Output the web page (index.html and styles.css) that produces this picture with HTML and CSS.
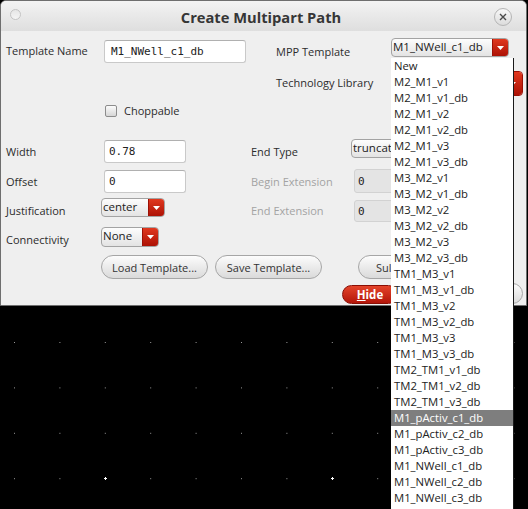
FILE: index.html
```html
<!DOCTYPE html>
<html>
<head>
<meta charset="utf-8">
<link rel="stylesheet" href="styles.css">
</head>
<body>
<div class="screen">
  <div class="window">
    <div class="titlebar">
      <span class="tb-dot"></span>
      <span class="title">Create Multipart Path</span>
      <span class="tb-close"><svg width="8" height="8" viewBox="0 0 8 8"><path d="M1 1L7 7M7 1L1 7" stroke="#4a4a4a" stroke-width="1.4" fill="none"/></svg></span>
    </div>
    <div class="form">
      <div class="row r1">
        <span class="lbl w98">Template Name</span>
        <div class="input mono in-name">M1_NWell_c1_db</div>
        <span class="lbl lbl-mpp">MPP Template</span>
        <div class="select sel-mpp"><span class="sel-text">M1_NWell_c1_db</span><span class="sel-btn"><svg width="7" height="4" viewBox="0 0 7 4"><path d="M0 0H7L3.5 4Z" fill="#fff"/></svg></span></div>
      </div>
      <div class="row r2">
        <span class="lbl lbl-tech">Technology Library</span>
        <div class="select sel-tech"><span class="sel-text"></span><span class="sel-btn wide"><svg width="7" height="4" viewBox="0 0 7 4"><path d="M0 0H7L3.5 4Z" fill="#fff"/></svg></span></div>
      </div>
      <div class="row r3">
        <span class="check"></span>
        <span class="check-lbl">Choppable</span>
      </div>
      <div class="row r4">
        <span class="lbl w98">Width</span>
        <div class="input mono in-small">0.78</div>
        <span class="lbl lbl-right w100">End Type</span>
        <div class="select sel-trunc"><span class="sel-text">truncat</span><span class="sel-btn"><svg width="7" height="4" viewBox="0 0 7 4"><path d="M0 0H7L3.5 4Z" fill="#fff"/></svg></span></div>
      </div>
      <div class="row r5">
        <span class="lbl w98">Offset</span>
        <div class="input mono in-small">0</div>
        <span class="lbl lbl-right w103 dis">Begin Extension</span>
        <div class="input mono in-dis h24">0</div>
      </div>
      <div class="row r6">
        <span class="lbl w95">Justification</span>
        <div class="select sel-center"><span class="sel-text">center</span><span class="sel-btn"><svg width="7" height="4" viewBox="0 0 7 4"><path d="M0 0H7L3.5 4Z" fill="#fff"/></svg></span></div>
        <span class="lbl lbl-endext w103 dis">End Extension</span>
        <div class="input mono in-dis h22">0</div>
      </div>
      <div class="row r7">
        <span class="lbl w95">Connectivity</span>
        <div class="select sel-none"><span class="sel-text">None</span><span class="sel-btn"><svg width="7" height="4" viewBox="0 0 7 4"><path d="M0 0H7L3.5 4Z" fill="#fff"/></svg></span></div>
      </div>
      <div class="row r8">
        <button class="btn btn-load">Load Template...</button>
        <button class="btn btn-save">Save Template...</button>
        <button class="btn btn-submit"><span class="clip">Sul</span></button>
      </div>
      <div class="row r9">
        <button class="btn-red"><u>H</u>ide</button>
        <button class="btn btn-close"></button>
      </div>
    </div>
  </div>
  <div class="canvas">
    <svg width="528" height="203" viewBox="0 0 528 203" shape-rendering="crispEdges">
      <defs>
        <pattern id="grid" x="14" y="36" width="45.4" height="45.4" patternUnits="userSpaceOnUse">
          <rect x="0" y="0" width="1" height="1" fill="#9a9a9a"/>
        </pattern>
      </defs>
      <rect x="0" y="0" width="528" height="203" fill="url(#grid)"/>
      <path d="M104 172h3M105 171v3" stroke="#fff" stroke-width="1"/>
      <path d="M331 172h3M332 171v3" stroke="#fff" stroke-width="1"/>
    </svg>
  </div>
  <ul class="popup">
    <li>New</li>
    <li>M2_M1_v1</li>
    <li>M2_M1_v1_db</li>
    <li>M2_M1_v2</li>
    <li>M2_M1_v2_db</li>
    <li>M2_M1_v3</li>
    <li>M2_M1_v3_db</li>
    <li>M3_M2_v1</li>
    <li>M3_M2_v1_db</li>
    <li>M3_M2_v2</li>
    <li>M3_M2_v2_db</li>
    <li>M3_M2_v3</li>
    <li>M3_M2_v3_db</li>
    <li>TM1_M3_v1</li>
    <li>TM1_M3_v1_db</li>
    <li>TM1_M3_v2</li>
    <li>TM1_M3_v2_db</li>
    <li>TM1_M3_v3</li>
    <li>TM1_M3_v3_db</li>
    <li>TM2_TM1_v1_db</li>
    <li>TM2_TM1_v2_db</li>
    <li>TM2_TM1_v3_db</li>
    <li class="hl">M1_pActiv_c1_db</li>
    <li>M1_pActiv_c2_db</li>
    <li>M1_pActiv_c3_db</li>
    <li>M1_NWell_c1_db</li>
    <li>M1_NWell_c2_db</li>
    <li>M1_NWell_c3_db</li>
  </ul>
</div>
</body>
</html>
```
FILE: styles.css
```css
* { box-sizing: border-box; }
html, body { margin: 0; padding: 0; }
body {
  background: #000;
  font-family: "Open Sans", "DejaVu Sans", sans-serif;
  font-size: 11px;
  color: #2c2c2c;
  overflow: hidden;
}
.screen {
  position: relative;
  width: 528px;
  height: 509px;
  display: flex;
  flex-direction: column;
}
.window {
  flex: none;
  width: 527px;
  height: 306px;
  background: #efefef;
  border: 1px solid #6e6e6e;
  border-radius: 6px 6px 0 0;
  display: flex;
  flex-direction: column;
  overflow: hidden;
}
.titlebar {
  flex: none;
  height: 30px;
  display: grid;
  grid-template-columns: 1fr auto 1fr;
  align-items: center;
  padding: 0 14px 0 9px;
  background: linear-gradient(#f3f3f3, #dedede);
}
.tb-dot {
  justify-self: start;
  width: 11px;
  height: 11px;
  margin-top: -3px;
  border-radius: 50%;
  border: 1px solid #c4c4c4;
  background: linear-gradient(#e6e6e6, #f4f4f4);
}
.title {
  font-weight: bold;
  font-size: 14.7px;
  color: #363636;
  margin-top: 1px;
}
.tb-close {
  justify-self: end;
  width: 18px;
  height: 18px;
  border-radius: 50%;
  border: 1px solid #b4b4b4;
  background: linear-gradient(#f8f8f8, #dcdcdc);
  display: flex;
  align-items: center;
  justify-content: center;
  margin-top: 2px;
}
.form {
  flex: 1;
  padding: 7px 0 0 5px;
  display: flex;
  flex-direction: column;
}
.row { display: flex; align-items: flex-start; flex: none; }
.r1 { height: 25px; }
.r2 { height: 33px; }
.r3 { height: 13px; margin-top: 8px; align-items: center; }
.r4 { height: 24px; margin-top: 22px; }
.r5 { height: 24px; margin-top: 6px; }
.r6 { height: 24px; margin-top: 5px; }
.r7 { height: 20px; margin-top: 5px; }
.r8 { height: 24px; margin-top: 8px; }
.r9 { height: 21px; margin-top: 4px; }

.lbl {
  line-height: 16px;
  margin-top: 5px;
  white-space: nowrap;
  flex: none;
}
.w95 { width: 95px; }
.w98 { width: 98px; }
.w100 { width: 100px; }
.w103 { width: 103px; }
.dis { color: #a3a3a3; }
.lbl-mpp { margin-left: 30px; width: 115px; margin-top: 6px; }
.lbl-tech { margin-left: 270px; width: 115px; margin-top: 12px; }
.lbl-right { margin-left: 65px; }
.lbl-endext { margin-left: 86px; }

.input {
  flex: none;
  background: #fff;
  border: 1px solid #c9c9c9;
  border-top-color: #b0b0b0;
  border-radius: 3px;
  display: flex;
  align-items: center;
}
.mono {
  font-family: "DejaVu Sans Mono", monospace;
  font-size: 11px;
  color: #222;
}
.in-name { width: 142px; height: 23px; margin-top: 2px; padding-left: 6px; }
.in-small { width: 82px; height: 23px; margin-top: 1px; padding-left: 4px; }
.in-dis {
  width: 60px;
  background: #e4e4e4;
  border-color: #d2d2d2;
  padding-left: 3px;
}
.h24 { height: 24px; }
.h22 { height: 22px; margin-top: 2px; }

.select {
  flex: none;
  display: flex;
  height: 19px;
  border: 1px solid #a3a3a3;
  border-radius: 4px;
  background: linear-gradient(#fdfdfd, #e3e3e3);
  overflow: hidden;
}
.sel-text {
  flex: 1;
  padding-left: 1px;
  line-height: 16px;
  font-size: 11.5px;
  color: #222;
  white-space: nowrap;
  overflow: hidden;
}
.sel-btn {
  flex: none;
  width: 16px;
  background: linear-gradient(#e0381f, #ad1205);
  border-left: 1px solid #9c1005;
  display: flex;
  align-items: center;
  justify-content: center;
}
.sel-btn.wide { width: 20px; }
.sel-mpp { width: 118px; }
.sel-tech { width: 132px; height: 25px; margin-top: 8px; border-color: #9c1005; }
.sel-trunc { width: 80px; }
.sel-center { width: 64px; }
.sel-none { width: 58px; height: 20px; }

.check {
  flex: none;
  width: 12px;
  height: 12px;
  margin-left: 99px;
  border: 1px solid #8c8c8c;
  border-radius: 2px;
  background: linear-gradient(#fbfbfb, #d6d6d6);
}
.check-lbl { margin-left: 7px; line-height: 16px; }

.btn {
  flex: none;
  height: 24px;
  border: 1px solid #a6a6a6;
  border-radius: 12px;
  background: linear-gradient(#fcfcfc, #dadada);
  font-family: "Open Sans", "DejaVu Sans", sans-serif;
  font-size: 11px;
  color: #333;
  padding: 0;
  display: flex;
  align-items: center;
  justify-content: center;
}
.btn-load { width: 107px; margin-left: 95px; }
.btn-save { width: 107px; margin-left: 7px; }
.btn-submit { width: 76px; margin-left: 36px; justify-content: flex-start; padding-left: 17px; }
.btn-red {
  flex: none;
  width: 56px;
  height: 19px;
  margin-left: 336px;
  margin-top: 2px;
  padding: 0;
  border: 1px solid #8a0e04;
  border-radius: 10px;
  background: linear-gradient(#e4442a, #b3160a);
  color: #fff;
  font-family: "Open Sans", "DejaVu Sans", sans-serif;
  font-weight: bold;
  font-size: 11.5px;
}
.btn-close { width: 83px; height: 21px; margin-left: 42px; }

.canvas {
  flex: 1;
  background: #000;
}
.canvas svg { display: block; }

.popup {
  position: absolute;
  left: 391px;
  top: 58px;
  width: 123px;
  height: 451px;
  margin: 0;
  padding: 0;
  list-style: none;
  background: #fff;
  border-right: 1px solid #1a1a1a;
}
.popup li {
  height: 16px;
  line-height: 16px;
  padding-left: 3px;
  font-size: 11.3px;
  color: #222;
  white-space: nowrap;
}
.popup li.hl {
  background: #7e7e7e;
  color: #fff;
}
```
